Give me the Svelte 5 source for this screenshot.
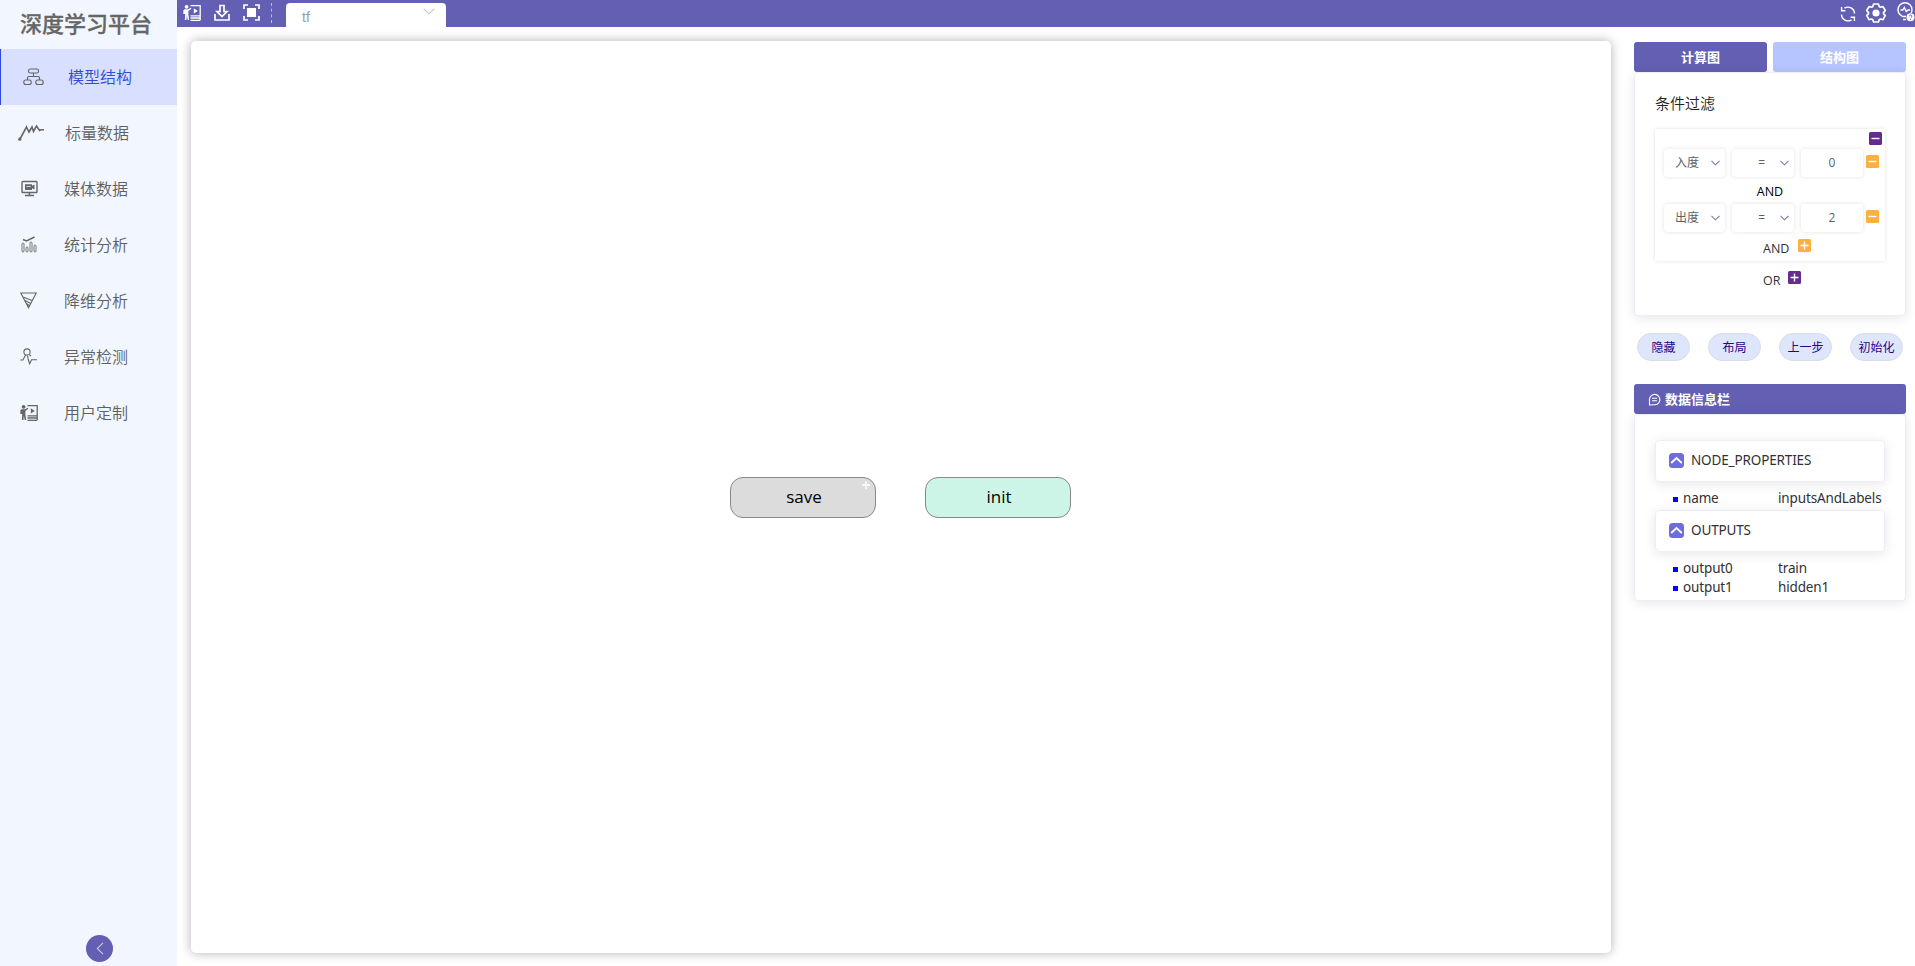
<script>
  const menu = [
    { icon: 'tree', label: '模型结构', left: 22, gap: 24 },
    { icon: 'line', label: '标量数据', left: 16, gap: 21 },
    { icon: 'media', label: '媒体数据', left: 20, gap: 26 },
    { icon: 'stats', label: '统计分析', left: 20, gap: 26 },
    { icon: 'cone', label: '降维分析', left: 19, gap: 27 },
    { icon: 'pulse', label: '异常检测', left: 19, gap: 27 },
    { icon: 'custom', label: '用户定制', left: 19, gap: 26 },
  ];
  const filters = [
    { field: '入度', op: '=', value: '0' },
    { field: '出度', op: '=', value: '2' },
  ];
  const actions = ['隐藏', '布局', '上一步', '初始化'];
  const groups = [
    { title: 'NODE_PROPERTIES', rows: [['name', 'inputsAndLabels']] },
    { title: 'OUTPUTS', rows: [['output0', 'train'], ['output1', 'hidden1']] },
  ];
  const nodes = [
    { label: 'save', kind: 'grey', expandable: true },
    { label: 'init', kind: 'mint', expandable: false },
  ];
</script>

{#snippet chevron()}
  <svg class="chev" width="9" height="6" viewBox="0 0 9 6"><path d="M.5.8 4.5 4.8 8.5.8" /></svg>
{/snippet}

{#snippet sign(kind, plus)}
  <svg class="sign {kind}" width="13" height="13" viewBox="0 0 13 13">
    <rect width="13" height="13" rx="1.5" />
    <path d={plus ? 'M2.5 6.5h8M6.5 2.5v8' : 'M2.5 6.5h8'} />
  </svg>
{/snippet}

{#snippet presenter()}
  <g stroke-width="1.300">
    <circle cx="3.600" cy="2.800" r="1.900" fill="currentColor" stroke="none" />
    <path d="M1.500 5.200h3.700l2.600-1.400.6 1-3 2.300v3.400l.8 5.500H4.700l-.8-4.500-.5 4.500H1.900l.3-6H.3V6.500z" fill="currentColor" stroke="none" />
    <path d="M7.500 1.600h9.700v10.200H7.500M7.500 14h9.800M7.500 16.300h9.800M17.200 12v4" />
    <path d="m10.800 4.300 4 2.600-4 2.600z" fill="currentColor" stroke="none" />
  </g>
{/snippet}

<div class="app">
  <aside>
    <h1>深度学习平台</h1>
    <nav>
      {#each menu as item, i}
        <div class="item" class:active={i === 0} style="padding-left:{item.left}px;gap:{item.gap}px">
          {#if item.icon === 'tree'}
            <svg width="21" height="18" viewBox="0 0 21 18"><rect x="5.500" y="1" width="10" height="4" rx="1.800" /><rect x=".8" y="12" width="7.400" height="4.500" rx="2" /><rect x="12.800" y="12" width="7.400" height="4.500" rx="2" /><path d="M10.500 5v3.500M4.500 12V9.800q0-1.300 1.500-1.300h9q1.500 0 1.500 1.300V12" /></svg>
          {:else if item.icon === 'line'}
            <svg class="bold" width="27" height="18" viewBox="0 0 27 18"><path d="M3 15 9.500 3l2.500 5 3-5 1.500 4.500L19.500 2l3 4.500 1.500-.8h3" /><circle cx="2.800" cy="15.200" r="1.600" fill="currentColor" stroke="none" /></svg>
          {:else if item.icon === 'media'}
            <svg width="17" height="17" viewBox="0 0 17 17"><rect x="1" y="1.500" width="15" height="11" rx=".8" stroke-width="1.400" /><path d="M4 4.200h7v1.600l2.500-1.300v5L11 8.200V10H4z" fill="currentColor" stroke="none" /><path d="M5.500 6.500h4" stroke="#f2f7ff" stroke-width=".8" /><path d="M8.500 13v2M4 15.500h9" stroke-width="1.600" /></svg>
          {:else if item.icon === 'stats'}
            <svg width="17" height="17" viewBox="0 0 17 17"><path d="m2 3.500 3.500 1.500L13.500 1" stroke-width="1.400" /><g stroke-width=".9"><rect x="1" y="7" width="2" height="9" rx="1" /><rect x="5" y="11" width="2" height="5" rx="1" /><rect x="9" y="6" width="2" height="10" rx="1" /><rect x="13" y="9" width="2" height="7" rx="1" /></g></svg>
          {:else if item.icon === 'cone'}
            <svg width="17" height="17" viewBox="0 0 17 17"><path d="M.8 1h15.400L8.500 15.800zM3 5l9 3.500M4.500 8.200l6.200 3.300M6.800 11.800l2.500 2" /></svg>
          {:else if item.icon === 'pulse'}
            <svg width="17" height="17" viewBox="0 0 17 17"><circle cx="7" cy="4" r="3.100" /><path d="M9.300 6.500 11 8.200M.3 12H3l2.500-5M7.500 7.500l.7 4 1.500 4.300 1.800-4H17" /></svg>
          {:else}
            <svg width="18" height="18" viewBox="0 0 18 18">{@render presenter()}</svg>
          {/if}
          <span>{item.label}</span>
        </div>
      {/each}
    </nav>
    <button class="collapse" aria-label="收起"><svg width="8" height="13" viewBox="0 0 8 13"><path d="M7 .8 1.300 6.500 7 12.200" /></svg></button>
  </aside>

  <div class="body">
    <header>
      <div class="tools">
        <svg width="18" height="18" viewBox="0 0 18 18">{@render presenter()}</svg>
        <svg width="16" height="18" viewBox="0 0 16 18"><path d="M6 1.500h4v6h3L8 12.500 3 7.500h3zM1 10v6h14v-6" /></svg>
        <svg width="17" height="17" viewBox="0 0 17 17"><rect x="4" y="4" width="9" height="9" fill="currentColor" stroke="none" /><path d="M1 5V1h4M12 1h4v4M16 12v4h-4M5 16H1v-4" /></svg>
      </div>
      <div class="divider"></div>
      <div class="file"><span>tf</span><svg width="12" height="7" viewBox="0 0 12 7"><path d="m.8.800 5.200 5 5.200-5" /></svg></div>
      <div class="right-tools">
        <svg width="16" height="16" viewBox="0 0 16 16"><path d="M4.500 2.200A6.500 6.500 0 0 1 14.500 7.500M1.500 8.500A6.500 6.500 0 0 0 11.500 13.800M1.600 1v3.800h3.800M14.400 15v-3.800h-3.800" stroke-width="1.400" /></svg>
        <svg width="20" height="20" viewBox="0 0 20 20"><path d="M7.600 1h4.800l.8 2.500 1.200.7 2.600-.6 2.300 4-1.800 2v1l1.800 2-2.300 4-2.600-.6-1.200.7-.8 2.300H7.600l-.8-2.300-1.200-.7-2.600.6-2.300-4 1.800-2v-1l-1.800-2 2.300-4 2.600.6 1.200-.7z" stroke-width="1.700" stroke-linejoin="round" /><circle cx="10" cy="10" r="3.600" fill="currentColor" stroke="none" /></svg>
        <svg width="18" height="20" viewBox="0 0 18 20"><path d="M5.500 14.500C2.800 13 1 10.700 1 7.800a7 7 0 0 1 14 0c0 1.200-.3 2.300-.8 3.200M5.500 14.500H9M6 17.500h3M3.500 8h2.300l1.500-2.500 2 4L11 8h2" stroke-width="1.400" /><circle cx="13.500" cy="15.300" r="4" fill="currentColor" stroke="none" /><path d="M12.400 14.300q0-1.300 1.200-1.300t1.200 1.200-1.200 1.600M13.600 17v1" stroke="#635fb3" stroke-width=".9" /></svg>
      </div>
    </header>

    <div class="work">
      <main>
        {#each nodes as node}
          <div class="node {node.kind}">
            {node.label}
            {#if node.expandable}<svg class="expand" width="8" height="8" viewBox="0 0 8 8"><path d="M0 4h8M4 0v8" /></svg>{/if}
          </div>
        {/each}
      </main>

      <section class="side">
        <div class="tabs"><div class="tab on">计算图</div><div class="tab">结构图</div></div>
        <div class="card filter">
          <h2>条件过滤</h2>
          <div class="box">
            <div class="drop">{@render sign('purple', false)}</div>
            {#each filters as f, i}
              {#if i}<div class="and">AND</div>{/if}
              <div class="cond">
                <div class="input field"><span>{f.field}</span>{@render chevron()}</div>
                <div class="input op"><span>{f.op}</span>{@render chevron()}</div>
                <div class="input val">{f.value}</div>
                {@render sign('orange', false)}
              </div>
            {/each}
            <div class="add"><span>AND</span>{@render sign('orange', true)}</div>
          </div>
          <div class="add or"><span>OR</span>{@render sign('purple', true)}</div>
        </div>

        <div class="actions">
          {#each actions as a}<button>{a}</button>{/each}
        </div>

        <div class="info-head">
          <svg width="13" height="13" viewBox="0 0 13 13"><path d="M1.500 12V6.500A5.200 5.200 0 1 1 6.500 11.800zM4 5.200h5M4 7.800h5" /></svg>
          <span>数据信息栏</span>
        </div>
        <div class="card info">
          {#each groups as g}
            <div class="group"><svg width="15" height="15" viewBox="0 0 15 15"><rect width="15" height="15" rx="3.500" /><path d="m2.200 10 5.300-5 5.300 5" /></svg><span>{g.title}</span></div>
            <div class="rows">
              {#each g.rows as r}<div class="row"><i></i><span class="key">{r[0]}</span><span>{r[1]}</span></div>{/each}
            </div>
          {/each}
        </div>
      </section>
    </div>
  </div>
</div>

<style>
  :global(body) { margin: 0; overflow: hidden; }
  * { box-sizing: border-box; }
  .app { display: flex; width: 1915px; height: 966px; background: #fff; font-family: "Open Sans", "Noto Sans CJK SC", sans-serif; color: #303133; }
  svg { display: block; flex: none; fill: none; stroke: currentColor; stroke-width: 1.1; }
  button { font: inherit; padding: 0; }
  aside { width: 177px; background: #f2f7ff; display: flex; flex-direction: column; flex: none; }
  h1 { margin: 0; height: 49px; padding: 0 0 0 20px; font: 500 22px/45px "Noto Sans CJK SC", sans-serif; color: #666; -webkit-text-stroke: .3px #666; white-space: nowrap; }
  .item { height: 56px; display: flex; align-items: center; padding-bottom: 1px; font: 350 16px/24px "Noto Sans CJK SC", sans-serif; color: #606060; border-left: 1px solid transparent; }
  .item span { padding-bottom: 2px; }
  .item svg { color: #666; }
  .item .bold { stroke-width: 1.6; }
  .item.active { background: #d9dfff; border-left-color: #2f49dd; }
  .item.active span { color: #2f49dd; }
  .collapse { margin: auto 0 4px 86px; width: 27px; height: 27px; border: 0; border-radius: 50%; background: #635fb3; color: #c9c8ea; display: flex; align-items: center; justify-content: center; }
  .body { flex: 1; min-width: 0; display: flex; flex-direction: column; }
  header { height: 27px; background: #635fb3; display: flex; color: #fff; }
  .tools { display: flex; gap: 13px; padding: 4px 0 0 6px; width: 94px; }
  .tools svg { stroke-width: 1.7; }
  .divider { height: 20px; margin: 3px 14px 0 0; border-left: 1px dashed #bdbbe0; }
  .file { width: 160px; height: 24px; margin-top: 3px; background: #fff; border-radius: 4px 4px 0 0; padding: 4px 11px 0 16px; display: flex; justify-content: space-between; color: #999ca5; font: 14px/20px "Liberation Sans", sans-serif; }
  .file svg { color: #c0c4cc; margin-top: 1px; }
  .right-tools { margin-left: auto; display: flex; gap: 11px; padding: 3px 0 0; }
  .right-tools svg:first-child { margin-top: 3px; }
  .right-tools svg:nth-child(2) { margin-left: -1px; }
  .right-tools svg:last-child { margin-top: -1px; }
  .work { flex: 1; display: flex; padding: 14px 9px 13px 14px; gap: 23px; }
  main { width: 1420px; height: 912px; display: flex; gap: 49px; align-items: flex-start; padding: 436px 0 0 539px; border-radius: 5px; box-shadow: 0 0 11px rgba(0, 0, 0, .31); background: #fff; }
  .node { position: relative; width: 146px; height: 41px; border: 1.500px solid #888; border-radius: 13px; text-align: center; font-size: 17px; line-height: 38px; color: #000; padding-left: 2px; }
  .grey { background: #dcdcdc; }
  .mint { background: #ccf5e7; }
  .expand { position: absolute; top: 3px; right: 5px; color: #fff; stroke-width: 1.4; }
  .side { width: 272px; display: flex; flex-direction: column; padding-top: 1px; }
  .tabs { display: flex; gap: 6px; }
  .tab { flex: 1; height: 30px; background: #b6c5ff; border-radius: 3px; color: #fff; text-align: center; font: 700 13px/29px "Noto Sans CJK SC", sans-serif; }
  .tab.on { background: #635fb3; }
  .card { margin: 0; background: #fff; border: 1px solid #ebeef5; border-radius: 4px; box-shadow: 0 2px 12px rgba(0, 0, 0, .1); }
  .filter { height: 244px; padding: 19px 20px 0; }
  h2 { margin: 0; height: 37px; font: 350 15px/22px "Noto Sans CJK SC", sans-serif; color: #222; }
  .box { height: 132px; box-shadow: 0 0 4px rgba(0, 0, 0, .13); padding: 3px 3px 0 9px; }
  .drop { display: flex; justify-content: flex-end; height: 17px; }
  .sign { stroke: #fff; stroke-width: 1.400; }
  .sign path { stroke: #fff; }
  .sign rect { stroke: none; }
  .purple rect { fill: #642c8f; }
  .orange rect { fill: #fbb040; }
  .cond { display: flex; height: 28px; }
  .cond .sign { margin: 6px 0 0 3px; }
  .input { height: 28px; border-radius: 4px; box-shadow: 0 0 4px rgba(0, 0, 0, .12); font-size: 12px; line-height: 28px; color: #606266; display: flex; align-items: center; justify-content: flex-end; padding-right: 5px; margin-right: 7px; width: 62px; }
  .input.field { width: 61px; gap: 12px; }
  .input.op { gap: 15px; }
  .input.val { justify-content: center; padding: 0; margin-right: 0; }
  .chev { color: #8a70aa; }
  .and { height: 27px; line-height: 30px; text-align: center; font-size: 12.500px; color: #000; margin-left: -6px; }
  .add { display: flex; gap: 9px; font-size: 12.500px; line-height: 18px; padding: 7px 0 0 99px; }
  .add span { padding-top: 1px; }
  .add.or { padding: 10px 0 0 108px; gap: 8px; }
  .actions { display: flex; justify-content: space-between; padding: 17px 3px 0; }
  .actions button { width: 53px; height: 28px; border: 1px solid #d8dde9; border-radius: 14px; background: #dee6fb; color: #2e0089; font: 400 12px/24px "Noto Sans CJK SC", sans-serif; white-space: nowrap; }
  .info-head { margin-top: 23px; height: 30px; background: #635fb3; border-radius: 3px; color: #fff; padding-left: 14px; display: flex; align-items: center; gap: 4px; font: 700 13px/29px "Noto Sans CJK SC", sans-serif; }
  .info-head span { padding-bottom: 1px; }
  .info { height: 187px; padding: 25px 20px 0; }
  .group, .row { font-family: "Noto Sans", sans-serif; font-size: 13.500px; letter-spacing: -.14px; }
  .group { height: 42px; margin-bottom: -1px; border: 1px solid #ebeef5; border-radius: 4px; box-shadow: 0 2px 12px rgba(0, 0, 0, .1); display: flex; align-items: center; gap: 7px; padding-left: 13px; }
  .group span { padding-bottom: 3px; }
  .group svg { color: #fff; stroke-width: 1.800; margin-top: -1px; }
  .group rect { fill: #6f6cdb; stroke: none; }
  .rows { padding: 8px 0 1px 18px; }
  .row { display: flex; align-items: center; height: 20px; line-height: 18px; white-space: nowrap; }
  .row span { padding-bottom: 2px; }
  .row + .row { margin-top: -1px; }
  .row i { width: 5px; height: 5px; background: #00f; margin: 1px 5px 0 0; }
  .key { width: 95px; }
</style>
